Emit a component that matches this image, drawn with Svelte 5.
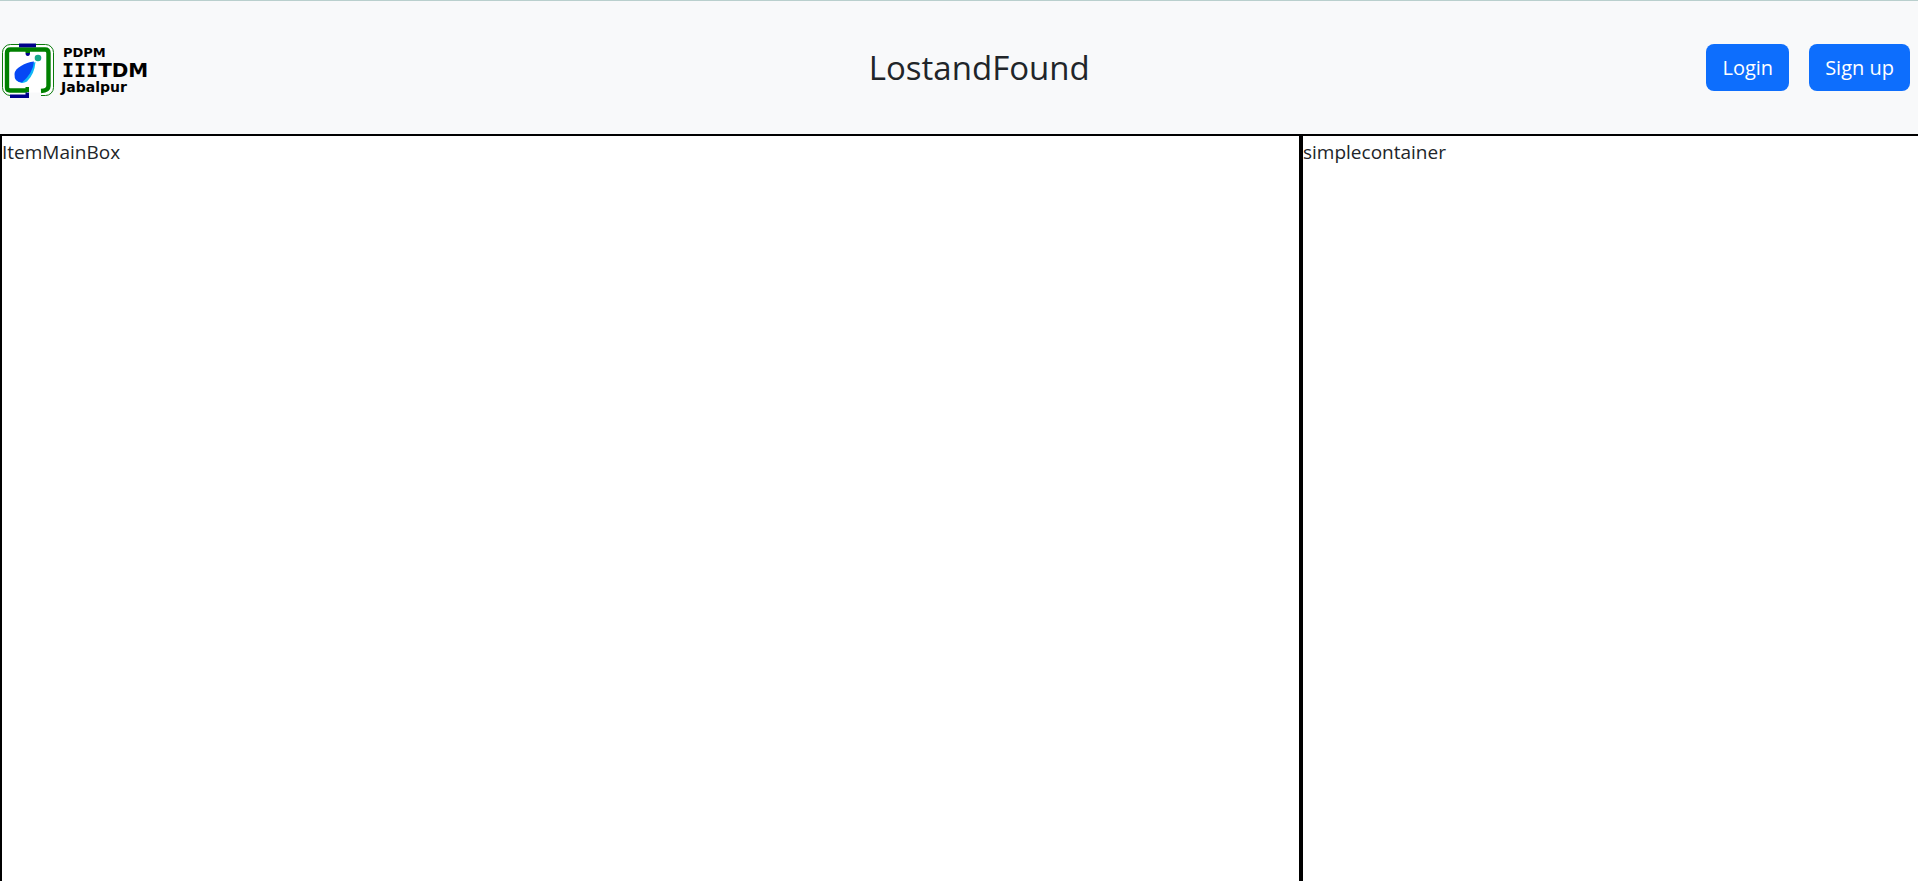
<script>
  const title = 'LostandFound';
</script>

<div class="page">
  <header>
    <a class="brand" href="/" aria-label="PDPM IIITDM Jabalpur">
      <svg width="152" height="60" viewBox="0 40 152 60" aria-hidden="true">
        <rect x="2.5" y="44.5" width="51" height="51" rx="8" fill="#fff" stroke="#0a7a0a" />
        <path d="M29 92.500H41V97H29z" fill="#f8f9fa" />
        <path d="M27 90.500H10Q7 90.500 7 87.500V53Q7 49.500 10.500 49.500H45Q48.500 49.500 48.500 53V86Q48.500 90.500 41 91" fill="none" stroke="#008000" stroke-width="4.400" />
        <path d="M25.500 50H30V53H25.500zM25.500 87H29V92H25.500z" fill="#008000" />
        <path d="M19 43.500H36V47.300H19z" fill="#00008b" />
        <path d="M25.500 53H30Q30 56 27.800 56Q25.500 56 25.500 53z" fill="#00008b" />
        <path d="M10 94.500H25.500V92.500H29V98H10z" fill="#00008b" />
        <path d="M35.500 62Q34.500 74 27 81.500Q21 85 16 80Q14 76 18 71Q24 65 35.500 62z" fill="#10b8f5" />
        <path d="M34 61.500Q33 73 22 82.500Q14 82 14.500 74Q15 69 21 66Q27 62 34 61.500z" fill="#0648f5" />
        <circle cx="38" cy="58" r="3.300" fill="#16a88a" />
        <g fill="#000" font-family="'DejaVu Sans', sans-serif" font-weight="700">
          <text x="63" y="57" font-size="13">PDPM</text>
          <text x="62" y="77" font-size="20"><tspan font-family="'DejaVu Sans Mono', monospace">III</tspan>TDM</text>
          <text x="61" y="92" font-size="14">Jabalpur</text>
        </g>
      </svg>
    </a>
    <h1>{title}</h1>
    <nav>
      <button type="button">Login</button>
      <button type="button">Sign up</button>
    </nav>
  </header>
  <main>
    <section class="items">ItemMainBox</section>
    <section class="side">simplecontainer</section>
  </main>
</div>

<style>
  :global(body) {
    margin: 0;
    background: #fff;
  }
  .page {
    display: flex;
    flex-direction: column;
    min-height: 100vh;
    box-sizing: border-box;
    border-top: 1px solid #b9cfcd;
    color: #212529;
    font: 19px/32px 'Open Sans', sans-serif;
  }
  header {
    display: flex;
    align-items: center;
    justify-content: space-between;
    padding: 43px 8px 43px 0;
    background: #f8f9fa;
  }
  .brand {
    flex: 0 0 252px;
    display: flex;
    height: 47px;
    align-items: center;
  }
  svg {
    flex: none;
    margin-top: 4px;
  }
  h1 {
    margin: 0;
    font-size: 33px;
    line-height: 42px;
    font-weight: 400;
  }
  nav {
    display: flex;
    gap: 20px;
  }
  button {
    padding: 8px 16px;
    border: 0;
    border-radius: 8px;
    background: #0d6efd;
    color: #fff;
    font: inherit;
    font-size: 20px;
    line-height: 31px;
    cursor: pointer;
  }
  main {
    flex: 1;
    display: grid;
    grid-template-columns: 1301fr 617fr;
    border-top: 2px solid #000;
  }
  section {
    border-left: 2px solid #000;
    min-width: 0;
  }
  .items {
    border-right: 2px solid #000;
  }
</style>
